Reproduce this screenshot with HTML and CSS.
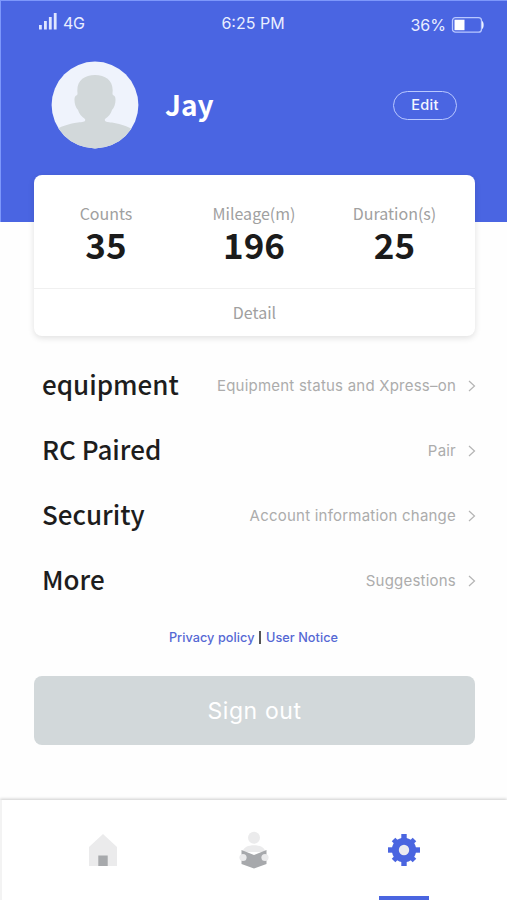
FILE: index.html
```html
<!DOCTYPE html>
<html lang="en">
<head>
<meta charset="utf-8">
<title>Profile</title>
<link rel="stylesheet" href="styles.css">
</head>
<body>
<div class="app">
  <header class="hero">
    <div class="status">
      <div class="signal">
        <svg width="20" height="18" viewBox="0 0 20 18" fill="#dfe6ff"><rect x="1" y="13" width="2.8" height="4.5"/><rect x="6" y="9" width="2.8" height="8.500"/><rect x="10.900" y="5" width="2.800" height="12.500"/><rect x="15.800" y="1" width="2.800" height="16.500"/></svg>
        <span class="network">4G</span>
      </div>
      <span class="time">6:25 PM</span>
      <div class="power">
        <span class="percent">36%</span>
        <svg width="34" height="18" viewBox="0 0 34 18"><rect x="1.500" y="1.600" width="29" height="14.600" rx="3" fill="none" stroke="#b9c8ff" stroke-width="1.300"/><rect x="3.500" y="3.700" width="10" height="10.500" fill="#fff"/><path d="M31 5c2.200 1 2.200 7 0 8z" fill="#eef2ff"/></svg>
      </div>
    </div>
    <div class="profile">
      <svg class="avatar" width="88" height="88" viewBox="0 0 88 88"><defs><clipPath id="face"><circle cx="44" cy="44" r="43.400"/></clipPath></defs><g clip-path="url(#face)"><rect width="88" height="88" fill="#eff3fc"/><path fill="#d2d8da" d="M26.500 32C25 20 33 14 44 14S63 20 61.500 32c0 1.500 0 2 2 3 2 2 1 11-2.500 14-1 4-4 7-7 9-1 3 2.500 3 7 3.500 10 1.500 18 5 24 9v20H2V70.500c7-5 15-7.500 25-9 5-.5 8-.5 7-3.500-3-2-6-5-7-9-3.500-3-4.500-12-2.500-14 2-1 2-1.500 2-3Z"/></g></svg>
      <h1 class="name">Jay</h1>
      <button class="edit">Edit</button>
    </div>
  </header>
  <section class="card">
    <div class="stats">
      <div class="stat"><span class="label">Counts</span><strong class="value">35</strong></div>
      <div class="stat"><span class="label">Mileage(m)</span><strong class="value">196</strong></div>
      <div class="stat"><span class="label">Duration(s)</span><strong class="value">25</strong></div>
    </div>
    <div class="detail">Detail</div>
  </section>
  <main class="menu">
    <div class="row"><span class="title">equipment</span><span class="hint">Equipment status and Xpress–on</span><svg class="chev" width="8" height="12" viewBox="0 0 8 12"><path d="M1 1l5.500 5L1 11"/></svg></div>
    <div class="row"><span class="title">RC Paired</span><span class="hint">Pair</span><svg class="chev" width="8" height="12" viewBox="0 0 8 12"><path d="M1 1l5.500 5L1 11"/></svg></div>
    <div class="row"><span class="title">Security</span><span class="hint">Account information change</span><svg class="chev" width="8" height="12" viewBox="0 0 8 12"><path d="M1 1l5.500 5L1 11"/></svg></div>
    <div class="row"><span class="title">More</span><span class="hint">Suggestions</span><svg class="chev" width="8" height="12" viewBox="0 0 8 12"><path d="M1 1l5.500 5L1 11"/></svg></div>
  </main>
  <div class="links"><a>Privacy policy</a><span class="bar"></span><a>User Notice</a></div>
  <button class="signout">Sign out</button>
  <nav class="tabs">
    <div class="tab"><svg width="30" height="34" viewBox="0 0 30 34"><path d="M15 1 29 14v19H1V14z" fill="#ebebec"/><rect x="10.300" y="22.500" width="9.400" height="10.500" fill="#a7a9ac"/></svg></div>
    <div class="tab"><svg width="30" height="38" viewBox="0 0 30 38"><circle cx="15" cy="6.800" r="6" fill="#ebebec"/><path d="M4 21C3 12 27 12 26 21z" fill="#ebebec"/><path d="M2.500 19 15 24l12.500-5v14L15 37.500 2.500 33z" fill="#a7a9ac"/><circle cx="4" cy="26.500" r="3.600" fill="#ebebec"/><circle cx="26" cy="26.500" r="3.600" fill="#ebebec"/></svg></div>
    <div class="tab active"><svg width="34" height="34" viewBox="-17 -17 34 34"><g fill="#4a65e0"><circle r="12.200"/><path id="tooth" d="M-2.700-16h5.400v6h-5.400z"/><path id="notch" d="M-2.500-14.800h5v5h-5z" transform="rotate(45)"/><use href="#tooth" transform="rotate(90)"/><use href="#notch" transform="rotate(90)"/><use href="#tooth" transform="rotate(180)"/><use href="#notch" transform="rotate(180)"/><use href="#tooth" transform="rotate(270)"/><use href="#notch" transform="rotate(270)"/></g><circle r="5.200" fill="#ebebf0"/></svg><span class="marker"></span></div>
  </nav>
</div>
</body>
</html>
```
FILE: styles.css
```css
* { box-sizing: border-box; }
body { margin: 0; background: #fefefe; font-family: Inter, "Liberation Sans", sans-serif; }
.app { width: 507px; height: 900px; display: flex; flex-direction: column; overflow: hidden; }
.hero { height: 222px; flex: none; background: #4a65e2; border: solid #7d97fb; border-width: 1px 0 0 1px; color: #e9eeff; }
.status { height: 46px; display: grid; grid-template-columns: 140px 1fr 140px; padding: 0 22px 0 37px; font-size: 16px; line-height: 20px; }
.signal, .power { display: flex; }
.signal { gap: 5px; padding-top: 11px; }
.network { padding-top: 1px; letter-spacing: -.4px; }
.time { padding: 12px 17px 0 0; text-align: center; white-space: nowrap; }
.power { gap: 5px; justify-content: flex-end; padding-top: 14px; }
.power svg { margin-top: 1px; }
.profile { display: flex; align-items: center; height: 88px; margin-top: 14px; padding: 0 50px; }
.name { margin: -3px 0 0 26px; font: 700 28px/40px "Noto Sans CJK SC", sans-serif; color: #fff; }
.edit { margin-left: auto; width: 64px; height: 29px; padding: 0; border: 1px solid #b9c8ff; border-radius: 15px; background: none; color: #f3f6ff; font: 500 14.500px/26px Inter, sans-serif; letter-spacing: .3px; }
.card { flex: none; width: 441px; height: 161px; margin: -47px 0 0 34px; background: #fff; border-radius: 8px; box-shadow: 0 2px 6px rgba(0,0,0,.12); font-family: "Noto Sans CJK SC", sans-serif; }
.stats { height: 114px; display: grid; grid-template-columns: 144px 152px 129px; padding-top: 26px; border-bottom: 1px solid #f0f0f0; }
.stat { display: flex; flex-direction: column; align-items: center; }
.label, .detail { color: #a0a0a0; font-size: 16px; line-height: 24px; }
.value { font-size: 35px; line-height: 37px; color: #1b1b1b; }
.detail { line-height: 47px; text-align: center; }
.menu { flex: none; padding: 17px 31px 0 42px; }
.row { height: 65px; display: flex; align-items: center; }
.title { margin-top: -4px; font: 500 26px/40px "Noto Sans CJK SC", sans-serif; color: #1d1d1d; }
.hint { margin-left: auto; font-size: 15px; letter-spacing: .22px; color: #acacac; white-space: nowrap; }
.chev { margin-left: 12px; fill: none; stroke: #b4b4b4; stroke-width: 1.200; }
.links { flex: none; height: 16px; margin-top: 16px; display: flex; align-items: center; justify-content: center; gap: 5px; font-size: 12.700px; font-weight: 500; letter-spacing: .05px; color: #5568d4; }
.bar { width: 1.500px; height: 13px; background: #555; }
.signout { flex: none; width: 441px; height: 69px; margin: 31px 0 0 34px; border: 0; border-radius: 8px; background: #d2d8da; color: #fff; font: 400 23px/30px Inter, sans-serif; letter-spacing: .6px; }
.tabs { flex: none; height: 100px; margin-top: 55px; display: grid; grid-template-columns: 202px 100px 200px; border-left: 2px solid #f3f3f3; background: #fff; box-shadow: 0 -1px 3px rgba(0,0,0,.2); }
.tab { display: flex; align-items: center; justify-content: center; }
.active { display: grid; grid-template-rows: 1fr 4px; justify-items: center; padding-top: 4px; }
.marker { width: 50px; height: 4px; background: #4a65e0; }
```
